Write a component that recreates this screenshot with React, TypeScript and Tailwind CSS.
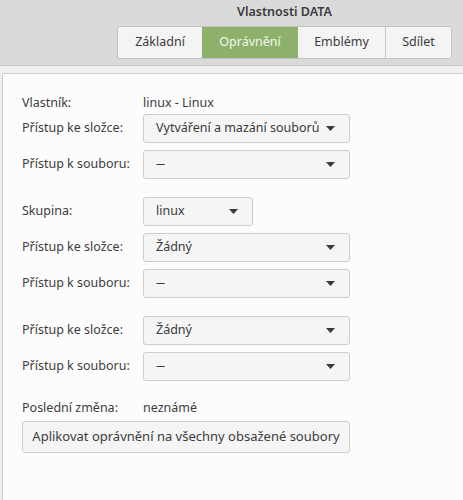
import React from "react";

const font = { fontFamily: '"Noto Sans", "Open Sans", sans-serif' };

function Arrow() {
  return (
    <svg width="9" height="5" viewBox="0 0 9 5" className="shrink-0">
      <path d="M0 0 L9 0 L4.5 5 Z" fill="#3a3a3a" />
    </svg>
  );
}

function Combo({ text, wide = true }: { text: string; wide?: boolean }) {
  const dash = text === "---";
  return (
    <div
      className={`${wide ? "w-[207px]" : "w-[110px]"} h-[29px] flex items-center justify-between pl-[12px] pr-[14px] rounded-[3px] border border-[#cdcdcd] bg-[#f5f5f5] text-[12.5px] text-[#3a3a3a]`}
    >
      <span className={dash ? "tracking-[-1.5px]" : ""}>{text}</span>
      <Arrow />
    </div>
  );
}

function Row({ label, children, className = "" }: { label: string; children: React.ReactNode; className?: string }) {
  return (
    <div className={`flex items-center ${className}`}>
      <div className="w-[121px] text-[12.5px] text-[#3c3c3c]">{label}</div>
      {children}
    </div>
  );
}

export default function App() {
  return (
    <div className="w-[463px] h-[500px] overflow-hidden bg-[#dadada] flex flex-col" style={font}>
      <div className="h-[65px] flex flex-col shrink-0 pl-[117px] pr-[11px]">
        <div className="h-[26px] flex items-center justify-center text-[12.5px] font-semibold text-[#3a3a3a] pb-[1px]">
          Vlastnosti DATA
        </div>
        <div className="flex h-[33px] rounded-[3px] border border-[#c2c2c2] overflow-hidden text-[12.5px]">
          <div className="w-[84px] flex items-center justify-center bg-[#f4f4f4] text-[#3c3c3c]">Základní</div>
          <div className="w-[96px] flex items-center justify-center bg-[#8db16a] text-[#f2f6ee]">Oprávnění</div>
          <div className="w-[88px] flex items-center justify-center bg-[#f4f4f4] text-[#3c3c3c] border-r border-[#c8c8c8]">Emblémy</div>
          <div className="flex-1 flex items-center justify-center bg-[#f4f4f4] text-[#3c3c3c]">Sdílet</div>
        </div>
      </div>
      <div className="h-px bg-[#c6c6c6] shrink-0" />
      <div className="h-[7px] bg-[#efefef] shrink-0" />
      <div className="flex-1 bg-[#efefef] pl-[2px]">
        <div className="h-full bg-[#fcfcfc] border-l border-t border-[#cfcfcf] pl-[19px] pt-[20px] flex flex-col">
          <Row label="Vlastník:" className="h-[18px]">
            <span className="text-[12.5px] text-[#3c3c3c]">linux - Linux</span>
          </Row>
          <Row label="Přístup ke složce:" className="mt-[2px]">
            <Combo text="Vytváření a mazání souborů" />
          </Row>
          <Row label="Přístup k souboru:" className="mt-[7px]">
            <Combo text="---" />
          </Row>
          <Row label="Skupina:" className="mt-[18px]">
            <Combo text="linux" wide={false} />
          </Row>
          <Row label="Přístup ke složce:" className="mt-[7px]">
            <Combo text="Žádný" />
          </Row>
          <Row label="Přístup k souboru:" className="mt-[7px]">
            <Combo text="---" />
          </Row>
          <Row label="Přístup ke složce:" className="mt-[18px]">
            <Combo text="Žádný" />
          </Row>
          <Row label="Přístup k souboru:" className="mt-[7px]">
            <Combo text="---" />
          </Row>
          <Row label="Poslední změna:" className="mt-[18px] h-[18px]">
            <span className="text-[12.5px] text-[#3c3c3c]">neznámé</span>
          </Row>
          <div className="mt-[4px] w-[328px] h-[32px] flex items-center justify-center rounded-[3px] border border-[#cdcdcd] bg-[#f5f5f5] text-[13px] text-[#3c3c3c]">
            Aplikovat oprávnění na všechny obsažené soubory
          </div>
        </div>
      </div>
    </div>
  );
}
